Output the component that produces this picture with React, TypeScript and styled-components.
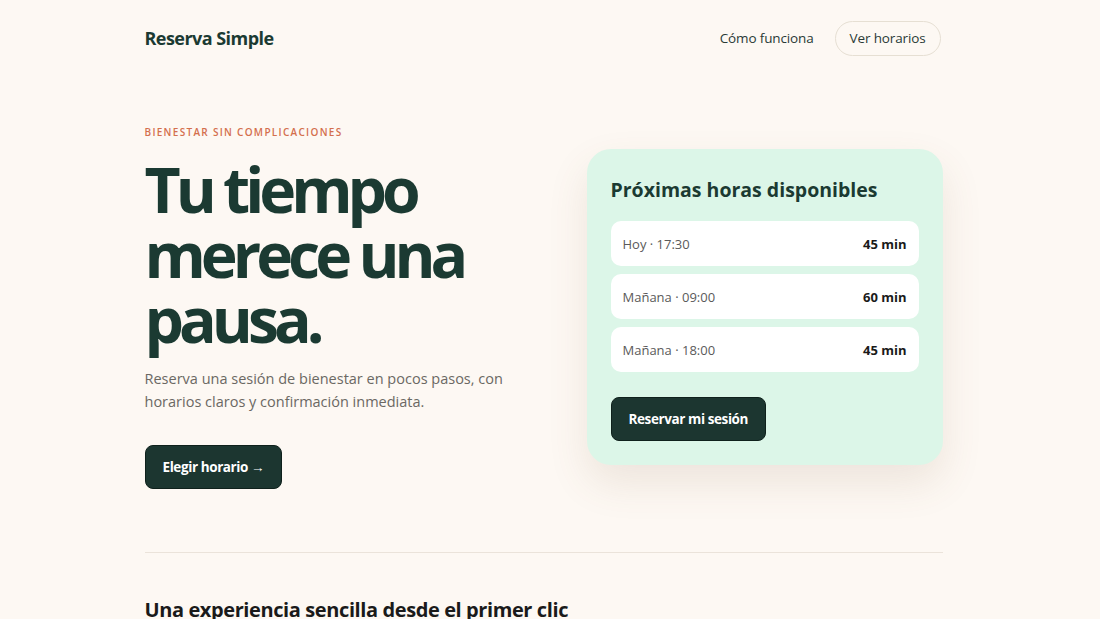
import React from "react";
import styled, { createGlobalStyle } from "styled-components";

type Slot = {
  id: number;
  label: string;
  duration: string;
};

const slots: Slot[] = [
  { id: 1, label: "Hoy · 17:30", duration: "45 min" },
  { id: 2, label: "Mañana · 09:00", duration: "60 min" },
  { id: 3, label: "Mañana · 18:00", duration: "45 min" },
];

const features = [
  { id: 1, title: "Elige tu hora", text: "Consulta los huecos libres y escoge el que mejor te venga." },
  { id: 2, title: "Confirma al instante", text: "Recibe la confirmación en tu correo sin esperas." },
  { id: 3, title: "Disfruta tu pausa", text: "Llega, desconecta y vuelve a tu día con calma." },
];

const GlobalStyle = createGlobalStyle`
  html, body {
    margin: 0;
    padding: 0;
    background: #fdf8f3;
  }
  body {
    font-family: "Open Sans", "Noto Sans", sans-serif;
    color: #1b3a32;
  }
  * {
    box-sizing: border-box;
  }
`;

export default function App() {
  return (
    <>
      <GlobalStyle />
      <S.Viewport>
        <S.Page>
          <S.Header>
            <S.Logo>Reserva Simple</S.Logo>
            <S.Nav>
              <S.NavLink>Cómo funciona</S.NavLink>
              <S.NavPill>Ver horarios</S.NavPill>
            </S.Nav>
          </S.Header>

          <S.Hero>
            <S.Intro>
              <S.Eyebrow>Bienestar sin complicaciones</S.Eyebrow>
              <S.Title>Tu tiempo merece una pausa.</S.Title>
              <S.Lead>
                Reserva una sesión de bienestar en pocos pasos, con horarios claros y
                confirmación inmediata.
              </S.Lead>
              <S.PrimaryButton>Elegir horario →</S.PrimaryButton>
            </S.Intro>

            <S.Card>
              <S.CardTitle>Próximas horas disponibles</S.CardTitle>
              <S.SlotList>
                {slots.map((slot) => (
                  <S.SlotRow key={slot.id}>
                    <S.SlotLabel>{slot.label}</S.SlotLabel>
                    <S.SlotDuration>{slot.duration}</S.SlotDuration>
                  </S.SlotRow>
                ))}
              </S.SlotList>
              <S.PrimaryButton>Reservar mi sesión</S.PrimaryButton>
            </S.Card>
          </S.Hero>

          <S.Divider />

          <S.Section>
            <S.SectionTitle>Una experiencia sencilla desde el primer clic</S.SectionTitle>
            <S.FeatureGrid>
              {features.map((f) => (
                <S.Feature key={f.id}>
                  <S.FeatureTitle>{f.title}</S.FeatureTitle>
                  <S.FeatureText>{f.text}</S.FeatureText>
                </S.Feature>
              ))}
            </S.FeatureGrid>
          </S.Section>
        </S.Page>
      </S.Viewport>
    </>
  );
}

export const S = {
  Viewport: styled.div`
    padding-right: 13px;
  `,
  Page: styled.div`
    max-width: 798px;
    margin: 0 auto;
    padding-bottom: 60px;
  `,
  Header: styled.header`
    display: flex;
    align-items: center;
    justify-content: space-between;
    height: 76px;
  `,
  Logo: styled.div`
    font-size: 18px;
    font-weight: 700;
    letter-spacing: -0.03em;
    color: #1b3a32;
  `,
  Nav: styled.nav`
    display: flex;
    align-items: center;
    gap: 21px;
  `,
  NavLink: styled.a`
    font-size: 13.5px;
    letter-spacing: -0.01em;
    color: #2a3a36;
    cursor: pointer;
  `,
  NavPill: styled.a`
    display: inline-flex;
    align-items: center;
    height: 35px;
    padding: 0 14px;
    border: 1px solid #e6dfd3;
    border-radius: 999px;
    font-size: 13.5px;
    letter-spacing: -0.01em;
    color: #2a3a36;
    cursor: pointer;
    margin-right: 2px;
  `,
  Hero: styled.section`
    display: grid;
    grid-template-columns: 1fr 356px;
    gap: 40px;
    align-items: center;
    padding: 49px 0 63px;
  `,
  Intro: styled.div`
    display: flex;
    flex-direction: column;
    align-items: flex-start;
  `,
  Eyebrow: styled.div`
    font-size: 10px;
    font-weight: 600;
    letter-spacing: 0.13em;
    text-transform: uppercase;
    color: #d46f4d;
    margin-bottom: 17px;
  `,
  Title: styled.h1`
    margin: 0 0 16px;
    font-size: 62.5px;
    line-height: 65px;
    font-weight: 700;
    letter-spacing: -0.08em;
    color: #1b3a32;
    max-width: 340px;
  `,
  Lead: styled.p`
    margin: 0 0 32px;
    font-size: 14.5px;
    line-height: 23px;
    color: #6b6863;
    max-width: 370px;
  `,
  PrimaryButton: styled.button`
    height: 44px;
    padding: 0 17px;
    border: 1px solid #0f211c;
    border-radius: 8px;
    background: #1c3630;
    color: #ffffff;
    font-family: inherit;
    font-size: 13.5px;
    font-weight: 700;
    letter-spacing: -0.03em;
    cursor: pointer;
  `,
  Card: styled.div`
    background: #dcf6e8;
    border-radius: 24px;
    padding: 27px 24px 24px;
    box-shadow: 0 18px 40px rgba(120, 90, 60, 0.12);
    display: flex;
    flex-direction: column;
    align-items: flex-start;
  `,
  CardTitle: styled.h2`
    margin: 0 0 18px;
    font-size: 19.5px;
    font-weight: 700;
    color: #1b3a32;
    letter-spacing: 0;
  `,
  SlotList: styled.div`
    display: flex;
    flex-direction: column;
    gap: 8px;
    width: 100%;
    margin-bottom: 25px;
  `,
  SlotRow: styled.div`
    display: flex;
    align-items: center;
    justify-content: space-between;
    height: 45px;
    padding: 0 12px;
    background: #ffffff;
    border-radius: 10px;
  `,
  SlotLabel: styled.span`
    font-size: 13px;
    color: #5a5a5a;
  `,
  SlotDuration: styled.span`
    font-size: 13px;
    font-weight: 700;
    color: #1a1a1a;
  `,
  Divider: styled.hr`
    margin: 0;
    border: none;
    border-top: 1px solid #ebe3da;
  `,
  Section: styled.section`
    padding: 43px 0 40px;
  `,
  SectionTitle: styled.h2`
    margin: 0 0 24px;
    font-size: 20px;
    font-weight: 700;
    letter-spacing: -0.02em;
    color: #1a1a1a;
  `,
  FeatureGrid: styled.div`
    display: grid;
    grid-template-columns: repeat(3, 1fr);
    gap: 20px;
  `,
  Feature: styled.div`
    background: #ffffff;
    border: 1px solid #efe7dd;
    border-radius: 16px;
    padding: 20px;
  `,
  FeatureTitle: styled.h3`
    margin: 0 0 8px;
    font-size: 16px;
    font-weight: 700;
    color: #1b3a32;
  `,
  FeatureText: styled.p`
    margin: 0;
    font-size: 14px;
    line-height: 21px;
    color: #6b6863;
  `,
};
